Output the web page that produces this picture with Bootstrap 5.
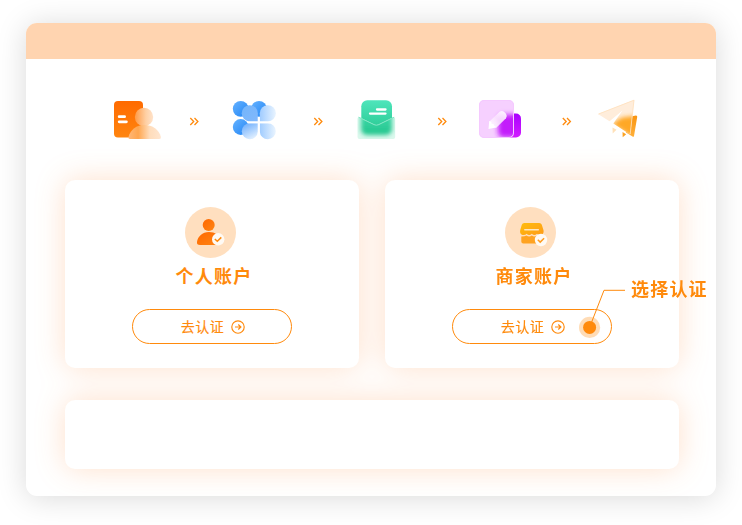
<!DOCTYPE html>
<html lang="zh-CN">
<head>
<meta charset="utf-8">
<meta name="viewport" content="width=device-width, initial-scale=1">
<title>选择认证</title>
<link href="https://cdn.jsdelivr.net/npm/bootstrap@5.3.0/dist/css/bootstrap.min.css" rel="stylesheet">
<style>
  :root { --brand: #ff8a0c; }
  body { font-family: "Noto Sans CJK SC", sans-serif; color: var(--brand); background: #fff; height: 525px; overflow: hidden; padding: 23px 26px 29px; }
  svg { display: block; flex: none; }
  .window { height: 473px; border-radius: 11px; box-shadow: 0 2px 30px rgba(0,0,0,.15); }
  .titlebar { height: 36px; background: #ffd4b0; border-radius: 11px 11px 0 0; }
  .steps { margin: 36px 0 0 75px; height: 50px; }
  .panels { margin: 35px 37px 0 39px; filter: drop-shadow(0 0 15px rgba(255,120,30,.23)); }
  .account-row { gap: 26px; margin-bottom: 32px; }
  .account { height: 188px; border-radius: 10px; padding-top: 27px; }
  .account-icon { margin-right: 3px; }
  .account-name { font-size: 18px; font-weight: 700; line-height: 24px; letter-spacing: 1.3px; margin: 5px 0 0 4px; }
  .btn-verify { --bs-btn-color: var(--brand); --bs-btn-border-color: var(--brand); --bs-btn-hover-color: var(--brand); --bs-btn-hover-border-color: var(--brand); --bs-btn-hover-bg: #fff4e8;
    width: 160px; height: 35px; margin-top: 22px; font-size: 14px; letter-spacing: .5px; gap: 7px; padding: 0 0 0 2px; -webkit-text-stroke: .15px; }
  .footer-panel { height: 69px; border-radius: 10px; }
  .callout { left: 575px; top: 270px; }
  .callout-label { left: 631px; top: 275px; font-size: 18px; line-height: 26px; font-weight: 700; letter-spacing: 1.2px; }
</style>
</head>
<body class="position-relative">
<main class="window bg-white">
  <header class="titlebar"></header>

  <nav class="steps d-flex align-items-center" aria-label="认证步骤">
    <svg width="62" height="50" viewBox="101 95 62 50">
      <defs>
        <linearGradient id="idCard" x1="0" y1="0" x2="0" y2="1"><stop stop-color="#ff6a00"/><stop offset="1" stop-color="#ff850f"/></linearGradient>
        <linearGradient id="idHead"><stop stop-color="#ff9a45"/><stop offset=".6" stop-color="#ffd0a4"/><stop offset="1" stop-color="#ffe3cb"/></linearGradient>
        <linearGradient id="idBody"><stop stop-color="#ffb777"/><stop offset=".3" stop-color="#ffa64f"/><stop offset=".65" stop-color="#ffdcba"/><stop offset="1" stop-color="#ffe6d0"/></linearGradient>
      </defs>
      <rect x="114" y="101" width="29" height="36.500" rx="4" fill="url(#idCard)"/>
      <path d="M119.200 116.700h5.400M119.200 121.800h7.200" stroke="#fff" stroke-width="2.800" stroke-linecap="round"/>
      <circle cx="144" cy="117" r="9.200" fill="url(#idHead)"/>
      <path d="M128.500 137c2-7.500 8-12 16-12s14.500 4.500 16.400 12q.3 2-1.500 2h-29.500q-1.800 0-1.400-2z" fill="url(#idBody)"/>
    </svg>
    <svg width="62" height="50" viewBox="163 95 62 50" fill="none" stroke="#ff8a0c" stroke-width="1.300"><path id="chevrons" d="M190.300 118l3.400 3.500-3.400 3.500M194.500 118l3.400 3.500-3.400 3.500"/></svg>
    <svg width="62" height="50" viewBox="225 95 62 50">
      <defs>
        <linearGradient id="petalBack" x1="0" y1="0" x2="1" y2="1"><stop stop-color="#65b2ff"/><stop offset="1" stop-color="#2185f5"/></linearGradient>
        <linearGradient id="petalA" x1="0" y1="0" x2="1" y2="1"><stop stop-color="#73b5fb"/><stop offset="1" stop-color="#81b8fc"/></linearGradient>
        <linearGradient id="petalB"><stop stop-color="#a0ccff"/><stop offset="1" stop-color="#e9f4ff"/></linearGradient>
        <linearGradient id="petalC" x1="0" y1="0" x2=".5" y2="1"><stop stop-color="#65a9fc"/><stop offset="1" stop-color="#dbecff"/></linearGradient>
      </defs>
      <g fill="url(#petalBack)"><circle cx="240.700" cy="108.800" r="7.900"/><circle cx="259" cy="108.800" r="7.900"/><circle cx="240.700" cy="127" r="7.900"/></g>
      <path d="M249.800 105.200a8 8 0 0 1 8 8v8.200h-8a8 8 0 0 1 0-16.200z" fill="url(#petalA)"/>
      <path d="M267.800 105.200a8 8 0 0 1 0 16.200h-8v-8.200a8 8 0 0 1 8-8z" fill="url(#petalB)"/>
      <path d="M249.800 123.200h8v8.200a8 8 0 1 1-8-8.200z" fill="url(#petalC)"/>
      <path d="M259.800 123.200h8a8 8 0 1 1-8 8.200z" fill="url(#petalB)"/>
      <path d="M249 122.300h23M258.800 117v20" stroke="#fff" stroke-width="1.800"/>
    </svg>
    <svg width="62" height="50" viewBox="163 95 62 50" fill="none" stroke="#ff8a0c" stroke-width="1.300"><use href="#chevrons"/></svg>
    <svg width="62" height="50" viewBox="349 95 62 50">
      <defs>
        <linearGradient id="letter" x1="0" y1="0" x2="0" y2="1"><stop stop-color="#4ee5bb"/><stop offset="1" stop-color="#25c68e"/></linearGradient>
        <filter id="soften" x="-30%" y="-30%" width="160%" height="160%"><feGaussianBlur stdDeviation="2"/></filter>
        <clipPath id="pocket"><path d="M357.500 119q0-2.500 2.500-1.500l14.200 7q2.200 1 4.400 0l14-7q2.600-1 2.600 1.500v18q0 2-2 2h-33.700q-2 0-2-2z"/></clipPath>
        <clipPath id="aboveFold"><path d="M350 95h55v22.500h-11L378.600 125q-2.200 1-4.400 0L359 117.500z"/></clipPath>
      </defs>
      <rect x="361.300" y="100.300" width="30.700" height="34" rx="6" fill="url(#letter)" clip-path="url(#aboveFold)"/>
      <g clip-path="url(#pocket)"><rect x="357" y="115" width="39" height="25" fill="#dcf8ed"/><rect x="361" y="100" width="31" height="35" rx="6" fill="url(#letter)" filter="url(#soften)"/></g>
      <path d="M358.500 117.200l15.700 7.500q2.200 1 4.400 0l15.500-7.500" fill="none" stroke="#82e7c5" stroke-width="1"/>
      <path d="M377 109.500h8.500M370 113.600h15.500" stroke="#fff" stroke-width="2.300" stroke-linecap="round"/>
    </svg>
    <svg width="62" height="50" viewBox="163 95 62 50" fill="none" stroke="#ff8a0c" stroke-width="1.300"><use href="#chevrons"/></svg>
    <svg width="62" height="50" viewBox="473 95 62 50">
      <defs>
        <linearGradient id="noteBack" x1="0" y1="0" x2="0" y2="1"><stop stop-color="#a900ff"/><stop offset="1" stop-color="#d21cff"/></linearGradient>
        <linearGradient id="pencil" x1="0" y1="1" x2="1" y2="0"><stop stop-color="#fff"/><stop offset=".5" stop-color="#fae3fe"/><stop offset="1" stop-color="#fff"/></linearGradient>
        <filter id="frost" x="-40%" y="-40%" width="180%" height="180%"><feGaussianBlur stdDeviation="2.600"/></filter>
        <clipPath id="note"><rect x="479" y="100" width="35" height="38" rx="5"/></clipPath>
      </defs>
      <rect x="498" y="113.500" width="23" height="24" rx="5" fill="url(#noteBack)"/>
      <g clip-path="url(#note)"><rect x="479" y="100" width="35" height="38" fill="#f6d0ff"/><rect x="498" y="114.500" width="22" height="23" rx="5" fill="#c31ffb" filter="url(#frost)"/></g>
      <rect x="479.500" y="100.500" width="34" height="37" rx="4.500" fill="none" stroke="#f5c9ff" stroke-width="1"/>
      <path d="M489.500 121.500l10-9.700q2.300-1.800 4.500 0l2 2q1.700 2.300 0 4.500l-10 9.700z" fill="url(#pencil)" opacity=".9"/>
      <path d="M489.200 121l.3 0q2 .8 2.300 2.800 2.300 0 2.600 2.100 1.500.2 1.600 1.600l-7.500 1.500z" fill="#fff"/>
    </svg>
    <svg width="62" height="50" viewBox="162.500 95 62 50" fill="none" stroke="#ff8a0c" stroke-width="1.300"><use href="#chevrons"/></svg>
    <svg width="62" height="50" viewBox="597 95 62 50">
      <defs>
        <clipPath id="wing"><path d="M598 114L634.300 99.800 630.200 134.500 613.300 123.500 622.500 110.500 609.500 121.300z"/></clipPath>
        <linearGradient id="tail" x1="0" y1="0" x2="0" y2="1"><stop stop-color="#f99410"/><stop offset="1" stop-color="#ffb03a"/></linearGradient>
        <filter id="glow" x="-40%" y="-40%" width="180%" height="180%"><feGaussianBlur stdDeviation="2.200"/></filter>
      </defs>
      <path d="M628 117l8-1.500q1.500 0 1.200 1.500L634 136q-.3 1.300-1.500.6L626 132.500z" fill="url(#tail)"/>
      <g clip-path="url(#wing)">
        <rect x="597" y="99" width="40" height="40" fill="#ffeddb"/>
        <path d="M612 124L622 117.500 638 115.500 634 138z" fill="#ffa825" filter="url(#glow)"/>
      </g>
      <path d="M598.500 114L634 100.200 630.200 134" fill="none" stroke="#ffe0bb" stroke-width=".8"/>
      <path d="M612.500 127.500l4 2.300-3.800 3.700z" fill="#ffe1b9"/><path d="M622.500 132l3.700 2.200-3.500 3z" fill="#fba223"/>
    </svg>
  </nav>

  <div class="panels">
    <div class="account-row d-flex">
      <section class="account bg-white flex-fill d-flex flex-column align-items-center">
        <svg class="account-icon" width="51" height="51" viewBox="0 0 51 51">
          <defs><linearGradient id="person" x1="0" y1="0" x2="1" y2="1"><stop stop-color="#ff6800"/><stop offset="1" stop-color="#ff8514"/></linearGradient></defs>
          <circle cx="25.500" cy="25.500" r="25.500" fill="#ffdfbf"/>
          <circle cx="23.700" cy="18" r="6" fill="url(#person)"/>
          <path d="M12 35c.8-5.500 5.300-10 12-10 6 0 10.500 3 11.500 8v5H15q-3.500 0-3-3z" fill="url(#person)"/>
          <circle cx="33.200" cy="32.300" r="6.200" fill="#fffaf4"/>
          <path d="M29.800 32l2.500 2.300 4-3.900" fill="none" stroke="#ff8a0c" stroke-width="1.500"/>
        </svg>
        <h2 class="account-name">个人账户</h2>
        <button class="btn btn-verify rounded-pill d-flex align-items-center justify-content-center" type="button">去认证
          <svg width="14" height="14" viewBox="0 0 14 14" fill="none" stroke="currentColor" stroke-width="1.150"><circle cx="7" cy="7" r="6.200"/><path d="M4 7h5.800M7.300 4.500L9.900 7 7.300 9.500"/></svg>
        </button>
      </section>
      <section class="account bg-white flex-fill d-flex flex-column align-items-center">
        <svg class="account-icon" width="51" height="51" viewBox="0 0 51 51">
          <defs><linearGradient id="shop" x1="0" y1="0" x2="1" y2="1"><stop stop-color="#ffbd0c"/><stop offset="1" stop-color="#ff9c18"/></linearGradient></defs>
          <circle cx="25.500" cy="25.500" r="25.500" fill="#ffdfbf"/>
          <path d="M19.300 16h14.900q2 0 2.600 1.800l1.700 5.400c.6 3-1 4.800-3.500 4.800q-2 0-3-1.200-2.600 2.400-5.200 0-2.600 2.400-5.200 0-1 1.200-3 1.200c-2.500 0-4-1.800-3.400-4.800l1.600-5.400q.6-1.800 2.500-1.800z" fill="url(#shop)"/>
          <path d="M16.300 29.500q3.500 0 5.200-1 2.600 1.800 5.300 0 2.600 1.800 5.200 0 1.700 1 5 1v5q0 2-2 2H18.300q-2 0-2-2z" fill="#ffa321"/>
          <path d="M19.800 22.700h13.500" stroke="#ffe6be" stroke-width="1.500" stroke-linecap="round"/>
          <circle cx="36" cy="33" r="6.200" fill="#fffaf4"/>
          <path d="M32.800 32.800l2.400 2.300 3.900-3.900" fill="none" stroke="#ff9d20" stroke-width="1.500"/>
        </svg>
        <h2 class="account-name">商家账户</h2>
        <button class="btn btn-verify rounded-pill d-flex align-items-center justify-content-center" type="button">去认证
          <svg width="14" height="14" viewBox="0 0 14 14" fill="none" stroke="currentColor" stroke-width="1.150"><circle cx="7" cy="7" r="6.200"/><path d="M4 7h5.800M7.300 4.500L9.900 7 7.300 9.500"/></svg>
        </button>
      </section>
    </div>
    <section class="footer-panel bg-white"></section>
  </div>
</main>

<svg class="callout position-absolute" width="52" height="72" viewBox="575 270 52 72">
  <circle cx="589.600" cy="327.400" r="10.600" fill="#ff8a0c" fill-opacity=".3"/>
  <circle cx="589.600" cy="327.400" r="6.500" fill="#ff8a0c"/>
  <path d="M590.500 325L604 290.300H625" fill="none" stroke="#ff8a0c" stroke-width="1"/>
</svg>
<div class="callout-label position-absolute text-nowrap">选择认证</div>
<script src="https://cdn.jsdelivr.net/npm/bootstrap@5.3.0/dist/js/bootstrap.bundle.min.js"></script>
</body>
</html>
